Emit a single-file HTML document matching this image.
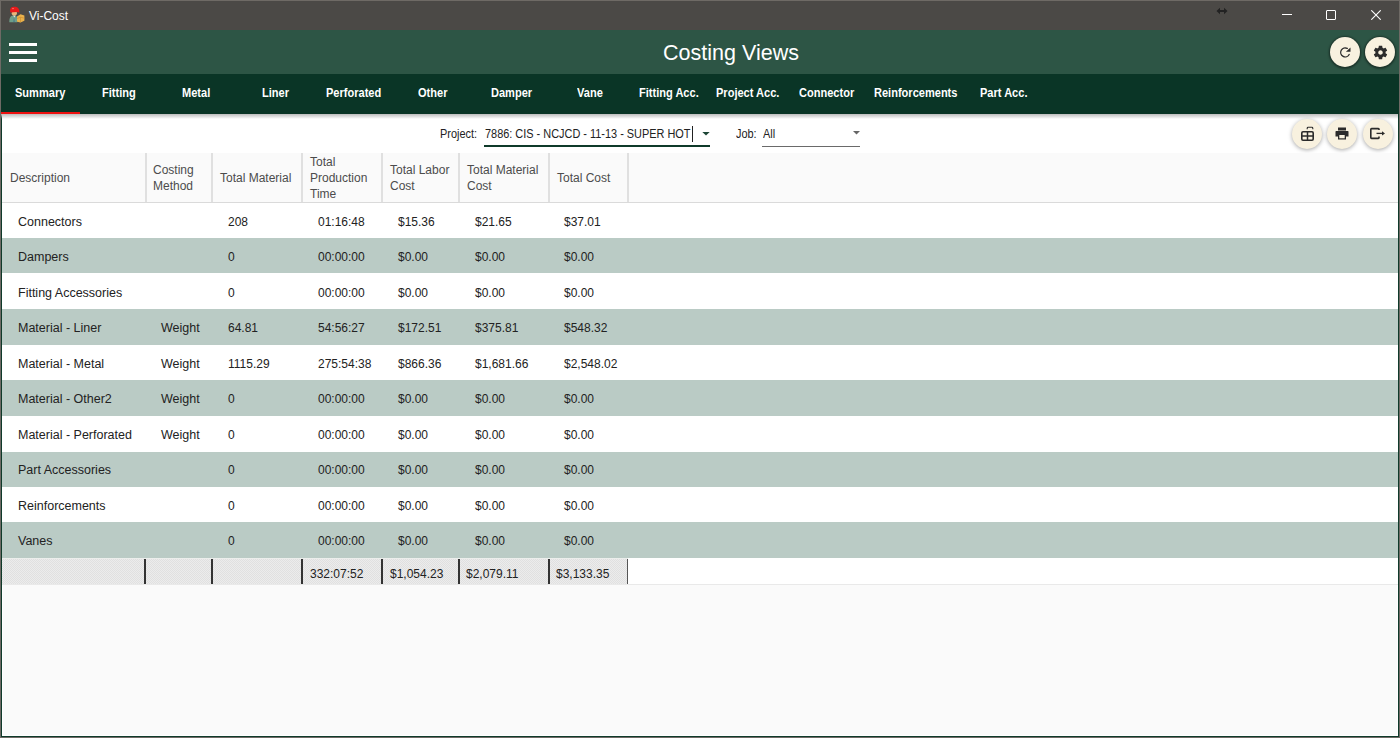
<!DOCTYPE html>
<html><head><meta charset="utf-8">
<style>
*{box-sizing:border-box;margin:0;padding:0}
html,body{width:1400px;height:738px;overflow:hidden}
body{position:relative;background:#6e6a65;font-family:"Liberation Sans",sans-serif}
.a{position:absolute;white-space:nowrap}
#title{left:1px;top:1px;width:1398px;height:29px;background:#4b4946}
#hdr{left:1px;top:30px;width:1398px;height:44px;background:#2d5545}
#tabs{left:1px;top:74px;width:1398px;height:40px;background:#0a3526}
#content{left:1px;top:114px;width:1398px;height:623px;background:#fafafa;border:1px solid #0f3a2a;border-top:0}
#inner{left:0;top:0;width:1396px;height:622px;border:1px solid #fff;border-top:0}
#shadow{left:1px;top:114px;width:1397px;height:5px;background:linear-gradient(#bdbdbd,rgba(250,250,250,0))}
.tab{top:73px;height:40px;line-height:40px;color:#fff;font-weight:bold;font-size:12px;transform:scaleX(0.92);transform-origin:0 0}
.circ{border-radius:50%;background:#f8f1df;width:30px;height:30px}
.hcell{color:#4c4c4c;font-size:12px;line-height:16px;margin-top:1px}
.row{left:2px;width:1396px}
.g{background:#bacbc5}
.w{background:#fff}
.cell{color:#222;font-size:12px;margin-top:1.5px}
.d{font-size:12.5px}
</style></head><body>
<div id="title" class="a"></div>
<!-- app icon -->
<svg class="a" style="left:0;top:0" width="30" height="30" viewBox="0 0 30 30">
  <path d="M9.3 22.2 C9.3 17.5 10.5 15.6 13 15.4 L15.5 15.4 C17 16 17.3 18 17.3 22.2 Z" fill="#6e9e8a"/>
  <path d="M13.2 15.6 L14.3 17.5 L15.4 15.6 Z" fill="#e8f0f0"/>
  <path d="M14 17.5 L14.6 22 L13.5 22 Z" fill="#3a6a8a"/>
  <ellipse cx="14.3" cy="13.2" rx="2.6" ry="2.4" fill="#e9b67a"/>
  <path d="M10.2 11.8 C9.8 8 11.5 6.8 14.5 6.8 C17.5 6.8 19.6 8.5 19.4 12.6 L16.5 12 L10.6 12.4 Z" fill="#e81a1a"/>
  <path d="M12 8.3 L14 8 L13 9.5 Z" fill="#ff8a8a"/>
  <path d="M17 16.5 L20.5 14.2 L24.4 15.5 L24.4 20.8 L20.5 22.4 L17 21.8 Z" fill="#e9b14c"/>
  <path d="M17 18.5 L20.5 17.2 L24.4 18.2 M20.5 17.2 V22.4" fill="none" stroke="#c98a2a" stroke-width="0.6"/>
</svg>
<div class="a" style="left:29px;top:8px;color:#fff;font-size:12px;line-height:16px">Vi-Cost</div>
<!-- resize arrow -->
<svg class="a" style="left:1216px;top:7px" width="12" height="8" viewBox="0 0 12 8">
  <path d="M0.5 4 L4 0.8 L4 3 L8 3 L8 0.8 L11.5 4 L8 7.2 L8 5 L4 5 L4 7.2 Z" fill="#222"/>
</svg>
<div class="a" style="left:1282px;top:14px;width:10px;height:1px;background:#fff"></div>
<div class="a" style="left:1326px;top:10px;width:10px;height:10px;border:1px solid #fff;border-radius:1px"></div>
<svg class="a" style="left:1371px;top:10px" width="10" height="10" viewBox="0 0 10 10">
  <path d="M0.3 0.3 L9.7 9.7 M9.7 0.3 L0.3 9.7" stroke="#fff" stroke-width="1.1"/>
</svg>

<div id="hdr" class="a"></div>
<div class="a" style="left:9px;top:43px;width:28px;height:3px;background:#fff"></div>
<div class="a" style="left:9px;top:51px;width:28px;height:3px;background:#fff"></div>
<div class="a" style="left:9px;top:59px;width:28px;height:3px;background:#fff"></div>
<div class="a" style="left:0;width:1400px;top:38px;text-align:center;padding-left:62px;color:#fff;font-size:21.5px;line-height:30px">Costing Views</div>
<div class="a circ" style="left:1330px;top:37px;box-shadow:0 0.5px 2px 1.2px rgba(0,0,0,0.42)"></div>
<div class="a circ" style="left:1365px;top:37px;box-shadow:0 0.5px 2px 1.2px rgba(0,0,0,0.42)"></div>
<!-- refresh icon -->
<svg class="a" style="left:1335px;top:42px" width="20" height="20" viewBox="0 0 20 20">
  <path d="M12.3 6.4 A4.5 4.5 0 1 0 14.2 12.5" fill="none" stroke="#2b2b2b" stroke-width="1.35" stroke-linecap="round"/>
  <path d="M10.9 9.8 L15.5 9.8 L15.5 5.4 Z" fill="#2b2b2b"/>
</svg>
<!-- gear icon -->
<svg class="a" style="left:1372px;top:44px" width="17" height="17" viewBox="0 0 24 24">
  <path fill="#2b2b2b" d="M19.14 12.94c.04-.3.06-.61.06-.94 0-.32-.02-.64-.07-.94l2.03-1.58c.18-.14.23-.41.12-.61l-1.92-3.32c-.12-.22-.37-.29-.59-.22l-2.39.96c-.5-.38-1.03-.7-1.62-.94l-.36-2.54c-.04-.24-.24-.41-.48-.41h-3.84c-.24 0-.43.17-.47.41l-.36 2.54c-.59.24-1.13.57-1.62.94l-2.39-.96c-.22-.08-.47 0-.59.22L2.74 8.87c-.12.21-.08.47.12.61l2.030 1.58c-.05.3-.09.63-.09.94s.02.64.07.94l-2.03 1.58c-.18.14-.23.41-.12.61l1.92 3.32c.12.22.37.29.59.22l2.39-.96c.5.38 1.030.7 1.62.94l.36 2.54c.05.24.24.41.48.41h3.84c.24 0 .44-.17.47-.41l.36-2.54c.59-.24 1.13-.56 1.62-.94l2.39.96c.22.08.47 0 .59-.22l1.92-3.32c.12-.22.07-.47-.12-.61l-2.01-1.58zM12 15.2c-1.77 0-3.2-1.43-3.2-3.2s1.43-3.2 3.2-3.2 3.2 1.43 3.2 3.2-1.43 3.2-3.2 3.2z"/>
</svg>

<div id="tabs" class="a"></div>
<div class="a" style="left:1px;top:112px;width:79px;height:2px;background:#ee1111"></div>
<div class="a tab" style="left:15px">Summary</div>
<div class="a tab" style="left:102px">Fitting</div>
<div class="a tab" style="left:182px">Metal</div>
<div class="a tab" style="left:262px">Liner</div>
<div class="a tab" style="left:326px">Perforated</div>
<div class="a tab" style="left:418px">Other</div>
<div class="a tab" style="left:491px">Damper</div>
<div class="a tab" style="left:577px">Vane</div>
<div class="a tab" style="left:639px">Fitting Acc.</div>
<div class="a tab" style="left:716px">Project Acc.</div>
<div class="a tab" style="left:799px">Connector</div>
<div class="a tab" style="left:874px">Reinforcements</div>
<div class="a tab" style="left:980px">Part Acc.</div>

<div id="content" class="a"><div id="inner" class="a"></div></div>
<div class="a" style="left:2px;top:114px;width:1396px;height:39px;background:#fff"></div>
<div id="shadow" class="a"></div>

<!-- filter bar -->
<div class="a" style="left:440px;top:126px;color:#222;font-size:12px;line-height:16px;transform:scaleX(0.91);transform-origin:0 0">Project:</div>
<div class="a" style="left:485px;top:126px;color:#222;font-size:12px;line-height:16px;transform:scaleX(0.91);transform-origin:0 0">7886: CIS - NCJCD - 11-13 - SUPER HOT</div>
<div class="a" style="left:692px;top:126px;width:1px;height:16px;background:#222"></div>
<div class="a" style="left:484px;top:145px;width:226px;height:2px;background:#0f3a2a"></div>
<svg class="a" style="left:702px;top:132px" width="8" height="4" viewBox="0 0 8 4"><path d="M0.3 0 L7.7 0 L4 3.6 Z" fill="#1d4536"/></svg>
<div class="a" style="left:736px;top:126px;color:#222;font-size:12px;line-height:16px;transform:scaleX(0.91);transform-origin:0 0">Job:</div>
<div class="a" style="left:763px;top:126px;color:#222;font-size:12px;line-height:16px;transform:scaleX(0.91);transform-origin:0 0">All</div>
<div class="a" style="left:762px;top:146px;width:98px;height:1px;background:#6a6a6a"></div>
<svg class="a" style="left:853px;top:131px" width="7" height="4" viewBox="0 0 7 4"><path d="M0 0 L7 0 L3.5 3.6 Z" fill="#666"/></svg>

<!-- toolbar round buttons -->
<div class="a circ" style="left:1292px;top:119px;box-shadow:0 1px 4px 0px rgba(0,0,0,0.35)"></div>
<div class="a circ" style="left:1327px;top:119px;box-shadow:0 1px 4px 0px rgba(0,0,0,0.35)"></div>
<div class="a circ" style="left:1363px;top:119px;box-shadow:0 1px 4px 0px rgba(0,0,0,0.35)"></div>
<!-- excel icon -->
<svg class="a" style="left:1300px;top:125px" width="15" height="16" viewBox="0 0 15 16">
  <rect x="1.8" y="6.8" width="11.4" height="8.4" rx="1.2" fill="none" stroke="#2b2b2b" stroke-width="1.6"/>
  <path d="M1.8 11 H13.2 M7.5 6.8 V15.2" stroke="#2b2b2b" stroke-width="1.5"/>
  <path d="M7.2 4.2 V3.2 Q7.2 2.3 8.1 2.3 H11.9 Q12.8 2.3 12.8 3.2 V4.2" fill="none" stroke="#2b2b2b" stroke-width="1.1"/>
</svg>
<!-- print icon -->
<svg class="a" style="left:1335px;top:127px" width="14" height="13" viewBox="0 0 14 13">
  <rect x="3" y="0.5" width="8" height="3" fill="#2b2b2b"/>
  <path d="M1 4 H13 Q13.5 4 13.5 5 V9.5 H11 V12.5 H3 V9.5 H0.5 V5 Q0.5 4 1 4 Z" fill="#2b2b2b"/>
  <rect x="4.3" y="8" width="5.4" height="3.3" fill="#f8f1df"/>
</svg>
<!-- export icon -->
<svg class="a" style="left:1369px;top:127px" width="17" height="13" viewBox="0 0 17 13">
  <path d="M10 3 V2.2 Q10 1.6 9.4 1.6 H2.6 Q1.8 1.6 1.8 2.4 V10.6 Q1.8 11.4 2.6 11.4 H9.4 Q10 11.4 10 10.8 V9.6" fill="none" stroke="#2b2b2b" stroke-width="1.6"/>
  <path d="M7.5 6.4 H13.5" stroke="#2b2b2b" stroke-width="1.3"/>
  <path d="M13 4.2 L16 6.4 L13 8.6 Z" fill="#2b2b2b"/>
</svg>

<!-- table header -->
<div class="a" style="left:2px;top:153px;width:1396px;height:49px;background:#fafafa"></div>
<div class="a" style="left:2px;top:202px;width:1396px;height:1px;background:#dadada"></div>
<div class="a" style="left:145px;top:153px;width:2px;height:49px;background:#e0e0e0"></div>
<div class="a" style="left:211px;top:153px;width:2px;height:49px;background:#e0e0e0"></div>
<div class="a" style="left:301px;top:153px;width:2px;height:49px;background:#e0e0e0"></div>
<div class="a" style="left:381px;top:153px;width:2px;height:49px;background:#e0e0e0"></div>
<div class="a" style="left:458px;top:153px;width:2px;height:49px;background:#e0e0e0"></div>
<div class="a" style="left:548px;top:153px;width:2px;height:49px;background:#e0e0e0"></div>
<div class="a" style="left:627px;top:153px;width:2px;height:49px;background:#e0e0e0"></div>
<div class="a hcell" style="left:10px;top:169px">Description</div>
<div class="a hcell" style="left:153px;top:161px">Costing<br>Method</div>
<div class="a hcell" style="left:220px;top:169px">Total Material</div>
<div class="a hcell" style="left:310px;top:153px">Total<br>Production<br>Time</div>
<div class="a hcell" style="left:390px;top:161px">Total Labor<br>Cost</div>
<div class="a hcell" style="left:467px;top:161px">Total Material<br>Cost</div>
<div class="a hcell" style="left:557px;top:169px">Total Cost</div>

<!-- rows -->
<div class="a row w" style="top:203px;height:35px"></div>
<div class="a cell d" style="left:18px;top:203.0px;line-height:35.5px">Connectors</div>
<div class="a cell" style="left:228px;top:203.0px;line-height:35.5px">208</div>
<div class="a cell" style="left:318px;top:203.0px;line-height:35.5px">01:16:48</div>
<div class="a cell" style="left:398px;top:203.0px;line-height:35.5px">$15.36</div>
<div class="a cell" style="left:475px;top:203.0px;line-height:35.5px">$21.65</div>
<div class="a cell" style="left:564px;top:203.0px;line-height:35.5px">$37.01</div>
<div class="a row g" style="top:238px;height:35px"></div>
<div class="a cell d" style="left:18px;top:238.5px;line-height:35.5px">Dampers</div>
<div class="a cell" style="left:228px;top:238.5px;line-height:35.5px">0</div>
<div class="a cell" style="left:318px;top:238.5px;line-height:35.5px">00:00:00</div>
<div class="a cell" style="left:398px;top:238.5px;line-height:35.5px">$0.00</div>
<div class="a cell" style="left:475px;top:238.5px;line-height:35.5px">$0.00</div>
<div class="a cell" style="left:564px;top:238.5px;line-height:35.5px">$0.00</div>
<div class="a row w" style="top:273px;height:36px"></div>
<div class="a cell d" style="left:18px;top:274.0px;line-height:35.5px">Fitting Accessories</div>
<div class="a cell" style="left:228px;top:274.0px;line-height:35.5px">0</div>
<div class="a cell" style="left:318px;top:274.0px;line-height:35.5px">00:00:00</div>
<div class="a cell" style="left:398px;top:274.0px;line-height:35.5px">$0.00</div>
<div class="a cell" style="left:475px;top:274.0px;line-height:35.5px">$0.00</div>
<div class="a cell" style="left:564px;top:274.0px;line-height:35.5px">$0.00</div>
<div class="a row g" style="top:309px;height:36px"></div>
<div class="a cell d" style="left:18px;top:309.5px;line-height:35.5px">Material - Liner</div>
<div class="a cell d" style="left:161px;top:309.5px;line-height:35.5px">Weight</div>
<div class="a cell" style="left:228px;top:309.5px;line-height:35.5px">64.81</div>
<div class="a cell" style="left:318px;top:309.5px;line-height:35.5px">54:56:27</div>
<div class="a cell" style="left:398px;top:309.5px;line-height:35.5px">$172.51</div>
<div class="a cell" style="left:475px;top:309.5px;line-height:35.5px">$375.81</div>
<div class="a cell" style="left:564px;top:309.5px;line-height:35.5px">$548.32</div>
<div class="a row w" style="top:345px;height:35px"></div>
<div class="a cell d" style="left:18px;top:345.0px;line-height:35.5px">Material - Metal</div>
<div class="a cell d" style="left:161px;top:345.0px;line-height:35.5px">Weight</div>
<div class="a cell" style="left:228px;top:345.0px;line-height:35.5px">1115.29</div>
<div class="a cell" style="left:318px;top:345.0px;line-height:35.5px">275:54:38</div>
<div class="a cell" style="left:398px;top:345.0px;line-height:35.5px">$866.36</div>
<div class="a cell" style="left:475px;top:345.0px;line-height:35.5px">$1,681.66</div>
<div class="a cell" style="left:564px;top:345.0px;line-height:35.5px">$2,548.02</div>
<div class="a row g" style="top:380px;height:36px"></div>
<div class="a cell d" style="left:18px;top:380.5px;line-height:35.5px">Material - Other2</div>
<div class="a cell d" style="left:161px;top:380.5px;line-height:35.5px">Weight</div>
<div class="a cell" style="left:228px;top:380.5px;line-height:35.5px">0</div>
<div class="a cell" style="left:318px;top:380.5px;line-height:35.5px">00:00:00</div>
<div class="a cell" style="left:398px;top:380.5px;line-height:35.5px">$0.00</div>
<div class="a cell" style="left:475px;top:380.5px;line-height:35.5px">$0.00</div>
<div class="a cell" style="left:564px;top:380.5px;line-height:35.5px">$0.00</div>
<div class="a row w" style="top:416px;height:35.5px"></div>
<div class="a cell d" style="left:18px;top:416.0px;line-height:35.5px">Material - Perforated</div>
<div class="a cell d" style="left:161px;top:416.0px;line-height:35.5px">Weight</div>
<div class="a cell" style="left:228px;top:416.0px;line-height:35.5px">0</div>
<div class="a cell" style="left:318px;top:416.0px;line-height:35.5px">00:00:00</div>
<div class="a cell" style="left:398px;top:416.0px;line-height:35.5px">$0.00</div>
<div class="a cell" style="left:475px;top:416.0px;line-height:35.5px">$0.00</div>
<div class="a cell" style="left:564px;top:416.0px;line-height:35.5px">$0.00</div>
<div class="a row g" style="top:451.5px;height:35.5px"></div>
<div class="a cell d" style="left:18px;top:451.5px;line-height:35.5px">Part Accessories</div>
<div class="a cell" style="left:228px;top:451.5px;line-height:35.5px">0</div>
<div class="a cell" style="left:318px;top:451.5px;line-height:35.5px">00:00:00</div>
<div class="a cell" style="left:398px;top:451.5px;line-height:35.5px">$0.00</div>
<div class="a cell" style="left:475px;top:451.5px;line-height:35.5px">$0.00</div>
<div class="a cell" style="left:564px;top:451.5px;line-height:35.5px">$0.00</div>
<div class="a row w" style="top:487px;height:35px"></div>
<div class="a cell d" style="left:18px;top:487.0px;line-height:35.5px">Reinforcements</div>
<div class="a cell" style="left:228px;top:487.0px;line-height:35.5px">0</div>
<div class="a cell" style="left:318px;top:487.0px;line-height:35.5px">00:00:00</div>
<div class="a cell" style="left:398px;top:487.0px;line-height:35.5px">$0.00</div>
<div class="a cell" style="left:475px;top:487.0px;line-height:35.5px">$0.00</div>
<div class="a cell" style="left:564px;top:487.0px;line-height:35.5px">$0.00</div>
<div class="a row g" style="top:522px;height:36px"></div>
<div class="a cell d" style="left:18px;top:522.5px;line-height:35.5px">Vanes</div>
<div class="a cell" style="left:228px;top:522.5px;line-height:35.5px">0</div>
<div class="a cell" style="left:318px;top:522.5px;line-height:35.5px">00:00:00</div>
<div class="a cell" style="left:398px;top:522.5px;line-height:35.5px">$0.00</div>
<div class="a cell" style="left:475px;top:522.5px;line-height:35.5px">$0.00</div>
<div class="a cell" style="left:564px;top:522.5px;line-height:35.5px">$0.00</div>
<div class="a" style="left:2px;top:558px;width:626px;height:26px;background:#e6e6e6;background-image:repeating-conic-gradient(#e0e0e0 0 25%,#ececec 0 50%);background-size:2px 2px;border-top:1px solid #eceeec"></div>
<div class="a" style="left:628px;top:558px;width:770px;height:26px;background:#fff"></div>
<div class="a" style="left:2px;top:584px;width:1396px;height:1px;background:#e9e9e9"></div>
<div class="a" style="left:144px;top:559px;width:2px;height:25px;background:#333"></div>
<div class="a" style="left:211px;top:559px;width:2px;height:25px;background:#333"></div>
<div class="a" style="left:301px;top:559px;width:2px;height:25px;background:#333"></div>
<div class="a" style="left:381px;top:559px;width:2px;height:25px;background:#333"></div>
<div class="a" style="left:458px;top:559px;width:2px;height:25px;background:#333"></div>
<div class="a" style="left:548px;top:559px;width:2px;height:25px;background:#333"></div>
<div class="a" style="left:627px;top:559px;width:1px;height:25px;background:#555"></div>
<div class="a cell" style="left:310px;top:559px;line-height:26px">332:07:52</div>
<div class="a cell" style="left:390px;top:559px;line-height:26px">$1,054.23</div>
<div class="a cell" style="left:466px;top:559px;line-height:26px">$2,079.11</div>
<div class="a cell" style="left:556px;top:559px;line-height:26px">$3,133.35</div>
</body></html>
